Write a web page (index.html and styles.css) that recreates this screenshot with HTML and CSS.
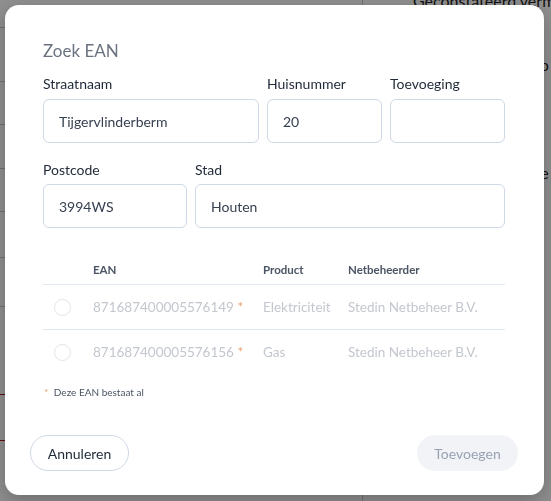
FILE: index.html
```html
<!DOCTYPE html>
<html lang="nl">
<head>
  <meta charset="UTF-8" />
  <meta name="viewport" content="width=device-width, initial-scale=1.0"/>
  <title>Zoek EAN</title>
  <link rel="stylesheet" href="styles.css">
</head>
<body>

<!-- page behind the dialog -->
<div class="page">
  <aside class="page-list">
    <div class="list-row" style="height: 27px"></div>
    <div class="list-row" style="height: 53px"></div>
    <div class="list-row" style="height: 42px"></div>
    <div class="list-row" style="height: 43px"></div>
    <div class="list-row" style="height: 42px"></div>
    <div class="list-row" style="height: 45px"></div>
    <div class="list-row" style="height: 48px"></div>
    <div class="list-row list-row-red" style="height: 87px"></div>
    <div class="list-row list-row-red" style="height: 45px"></div>
  </aside>
  <section class="page-detail">
    <p class="detail-title">Geconstateerd verm</p>
    <p class="detail-line">Aansluitwaarde pro</p>
    <p class="detail-line detail-line-low">Vermogen bekende</p>
  </section>
</div>

<!-- Modal: Zoek EAN -->
<div class="overlay">
  <div class="modal">
    <div class="modal-body">
      <h2 class="modal-title">Zoek EAN</h2>

      <div class="form-row row-address">
        <div class="field">
          <label>Straatnaam</label>
          <input type="text" value="Tijgervlinderberm">
        </div>
        <div class="field">
          <label>Huisnummer</label>
          <input type="text" value="20">
        </div>
        <div class="field">
          <label>Toevoeging</label>
          <input type="text" value="">
        </div>
      </div>

      <div class="form-row row-city">
        <div class="field">
          <label>Postcode</label>
          <input type="text" value="3994WS">
        </div>
        <div class="field">
          <label>Stad</label>
          <input type="text" value="Houten">
        </div>
      </div>

      <table class="ean-table">
        <thead>
          <tr><th class="col-radio"></th><th class="col-ean">EAN</th><th class="col-product">Product</th><th>Netbeheerder</th></tr>
        </thead>
        <tbody>
          <tr>
            <td><span class="radio"></span></td>
            <td>871687400005576149 <span class="star">*</span></td>
            <td>Elektriciteit</td>
            <td>Stedin Netbeheer B.V.</td>
          </tr>
          <tr>
            <td><span class="radio"></span></td>
            <td>871687400005576156 <span class="star">*</span></td>
            <td>Gas</td>
            <td>Stedin Netbeheer B.V.</td>
          </tr>
        </tbody>
      </table>

      <p class="note"><span class="star">*</span> Deze EAN bestaat al</p>
    </div>

    <div class="modal-footer">
      <button class="btn-outline">Annuleren</button>
      <button class="btn-disabled" disabled>Toevoegen</button>
    </div>
  </div>
</div>

</body>
</html>
```

FILE: styles.css
```css
body { margin: 0; font-family: Lato, "Noto Sans", sans-serif; background: #fff; color: #1f2937; overflow: hidden; }

/* page behind */
.page { display: grid; grid-template-columns: 363px 1fr; height: 501px; }
.page-list { border-right: 1px solid #c9ccd3; }
.list-row { border-bottom: 1px solid #c3c9d6; }
.list-row-red { border-bottom-color: #b01c1c; }
.page-detail { padding-left: 50px; overflow: hidden; }
.detail-title { margin: -9px 0 0; font-size: 16px; line-height: 20px; color: #222; white-space: nowrap; }
.detail-line { margin: 44px 0 0; font-size: 16px; line-height: 20px; color: #222; white-space: nowrap; }
.detail-line-low { margin-top: 88px; }

/* modal */
.overlay { position: fixed; inset: 0; background: rgba(0,0,0,0.44); padding: 5px; }
.modal {
  box-sizing: border-box; width: 539px; height: 490px; background: #fff; border-radius: 14px;
  padding: 34px 0 24px; display: flex; flex-direction: column;
  box-shadow: 0 6px 20px rgba(0,0,0,0.25);
}
.modal-body { padding: 0 39px 0 38px; }
.modal-title { margin: 0 0 11px; font-size: 17px; font-weight: 400; line-height: 24px; color: #6b7280; }

.form-row { display: grid; gap: 8px; }
.row-address { grid-template-columns: 216px 115px 115px; margin-bottom: 17px; }
.row-city { grid-template-columns: 144px 310px; }
.field label { display: block; font-size: 14px; line-height: 20px; color: #1f2937; margin-bottom: 5px; }
.row-city .field label { margin-bottom: 4px; }
.field input {
  box-sizing: border-box; width: 100%; height: 44px; border: 1px solid #cfd8e6; border-radius: 6px;
  padding: 0 15px; font-family: inherit; font-size: 14px; color: #374151; outline: none;
}

.ean-table { width: 100%; border-collapse: collapse; margin-top: 26px; }
.ean-table th {
  height: 30px; padding: 0; text-align: left; font-size: 11.5px; font-weight: 700; color: #4b5563;
  border-bottom: 1px solid #e2e8f0;
}
.col-radio { width: 50px; }
.col-ean { width: 170px; }
.col-product { width: 85px; }
.ean-table td { height: 44px; padding: 0; font-size: 13.5px; color: #c3c7ce; white-space: nowrap; }
.ean-table tbody tr:first-child td { border-bottom: 1px solid #e2e8f0; }
.radio { display: block; box-sizing: border-box; width: 17px; height: 17px; margin-left: 11px; border: 1px solid #e1e4e9; border-radius: 50%; }
.star { color: #e6a06e; }

.note { margin: 12px 0 0 1px; font-size: 10px; line-height: 12px; color: #4b5563; }
.note .star { margin-right: 3px; }

.modal-footer { margin-top: auto; display: flex; justify-content: space-between; padding: 0 26px 0 25px; }
.btn-outline, .btn-disabled { height: 36px; border-radius: 18px; font-family: inherit; font-size: 14px; }
.btn-outline { width: 99px; background: #fff; border: 1px solid #cfd8e6; color: #1f2937; }
.btn-disabled { width: 101px; background: #f1f3f6; border: none; color: #98a2b3; }
```
